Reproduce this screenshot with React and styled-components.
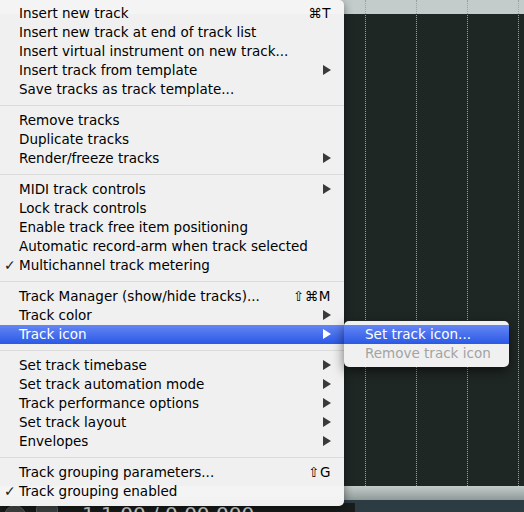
import React from 'react';
import styled, { createGlobalStyle } from 'styled-components';

const GlobalStyle = createGlobalStyle`
  html, body {
    margin: 0;
    padding: 0;
    background: #1f2725;
  }
  body {
    font-family: "Lucida Grande", "DejaVu Sans", "Noto Sans", sans-serif;
    -webkit-font-smoothing: antialiased;
  }
`;

const Screen = styled.div`
  position: relative;
  width: 524px;
  height: 512px;
  overflow: hidden;
  display: flex;
  flex-direction: column;
`;

const Timeline = styled.div`
  height: 486px;
  flex-shrink: 0;
  display: flex;
  padding-left: 365px;
  background: linear-gradient(#c3cccb 0, #c3cccb 14px, #1f2725 14px);
`;

const Beat = styled.div`
  width: 50px;
  flex-shrink: 0;
  border-left: 1px dotted #97a19f;
`;

const Scrollbar = styled.div`
  height: 14px;
  flex-shrink: 0;
  background: linear-gradient(#c4ccca, #a9b3b1 50%, #8f9997);
`;

const Footer = styled.div`
  flex: 1;
  min-height: 0;
  overflow: hidden;
  display: flex;
  align-items: flex-start;
  background: #2d3b43;
`;

const Transport = styled.div`
  width: 351px;
  height: 20px;
  margin-top: 3px;
  background: #1a1c1c;
  display: flex;
  align-items: flex-start;
  gap: 10px;
  padding-left: 4px;
  overflow: hidden;
`;

const RoundButton = styled.div`
  width: 20px;
  height: 20px;
  margin-top: 2px;
  border-radius: ${(p) => (p.$square ? '3px' : '50%')};
  background: linear-gradient(#4a4e4e, #2a2d2d);
  border: 1px solid #5c6262;
  flex-shrink: 0;
`;

const Clock = styled.div`
  margin-left: 14px;
  margin-top: 1px;
  color: #dfe3e3;
  font-family: "DejaVu Sans", sans-serif;
  font-size: 20px;
  line-height: 20px;
  white-space: nowrap;
`;

const Menu = styled.div`
  position: absolute;
  left: 0;
  top: 0;
  width: 344px;
  padding: 4px 0 5px;
  box-sizing: border-box;
  background: rgba(245, 245, 245, 0.98);
  border-radius: 0 5px 5px 0;
  box-shadow: 0 3px 10px rgba(0, 0, 0, 0.45);
`;

const SubMenu = styled(Menu)`
  left: 344px;
  top: 321px;
  width: 165px;
  padding: 4px 0;
  border-radius: 5px;
  box-shadow: 0 4px 12px rgba(0, 0, 0, 0.55);
`;

const Row = styled.div`
  position: relative;
  height: 19px;
  box-sizing: border-box;
  display: flex;
  align-items: center;
  padding: 0 13px 1px ${(p) => p.$indent || 19}px;
  font-size: 13.5px;
  color: ${(p) => (p.$disabled ? '#a3a3a3' : p.$active ? '#fff' : '#000')};
  background: ${(p) =>
    p.$active ? 'linear-gradient(#6486f4, #2b59e6)' : 'transparent'};
  white-space: nowrap;
`;

const Label = styled.span`
  flex: 1;
`;

const Check = styled.span`
  position: absolute;
  left: 4px;
  font-size: 14px;
  font-weight: bold;
  color: #222;
`;

const Shortcut = styled.span`
  font-family: "DejaVu Sans", sans-serif;
  font-size: 13.5px;
  letter-spacing: 0.5px;
`;

const Separator = styled.div`
  height: 12px;
  display: flex;
  align-items: center;
  &::after {
    content: '';
    flex: 1;
    height: 1px;
    background: #dbdbdb;
  }
`;

const Arrow = ({ light }) => (
  <svg width="8" height="10" viewBox="0 0 8 10">
    <path d="M0 0 L8 5 L0 10 Z" fill={light ? '#fff' : '#3a3a3a'} />
  </svg>
);

const groups = [
  [
    { label: 'Insert new track', key: '⌘T' },
    { label: 'Insert new track at end of track list' },
    { label: 'Insert virtual instrument on new track...' },
    { label: 'Insert track from template', sub: true },
    { label: 'Save tracks as track template...' },
  ],
  [
    { label: 'Remove tracks' },
    { label: 'Duplicate tracks' },
    { label: 'Render/freeze tracks', sub: true },
  ],
  [
    { label: 'MIDI track controls', sub: true },
    { label: 'Lock track controls' },
    { label: 'Enable track free item positioning' },
    { label: 'Automatic record-arm when track selected' },
    { label: 'Multichannel track metering', checked: true },
  ],
  [
    { label: 'Track Manager (show/hide tracks)...', key: '⇧⌘M' },
    { label: 'Track color', sub: true },
    { label: 'Track icon', sub: true, active: true },
  ],
  [
    { label: 'Set track timebase', sub: true },
    { label: 'Set track automation mode', sub: true },
    { label: 'Track performance options', sub: true },
    { label: 'Set track layout', sub: true },
    { label: 'Envelopes', sub: true },
  ],
  [
    { label: 'Track grouping parameters...', key: '⇧G' },
    { label: 'Track grouping enabled', checked: true },
  ],
];

const MenuItem = ({ item }) => (
  <Row $active={item.active}>
    {item.checked && <Check>✓</Check>}
    <Label>{item.label}</Label>
    {item.key && <Shortcut>{item.key}</Shortcut>}
    {item.sub && <Arrow light={item.active} />}
  </Row>
);

const App = () => (
  <>
    <GlobalStyle />
    <Screen>
      <Timeline>
        <Beat />
        <Beat />
        <Beat />
        <Beat />
      </Timeline>
      <Scrollbar />
      <Footer>
        <Transport>
          <RoundButton />
          <RoundButton $square />
          <Clock>1.1.00 / 0.00.000</Clock>
        </Transport>
      </Footer>

      <Menu>
        {groups.map((group, i) => (
          <React.Fragment key={i}>
            {i > 0 && <Separator />}
            {group.map((item) => (
              <MenuItem key={item.label} item={item} />
            ))}
          </React.Fragment>
        ))}
      </Menu>

      <SubMenu>
        <Row $active $indent={21}>
          <Label>Set track icon...</Label>
        </Row>
        <Row $disabled $indent={21}>
          <Label>Remove track icon</Label>
        </Row>
      </SubMenu>
    </Screen>
  </>
);

export default App;
